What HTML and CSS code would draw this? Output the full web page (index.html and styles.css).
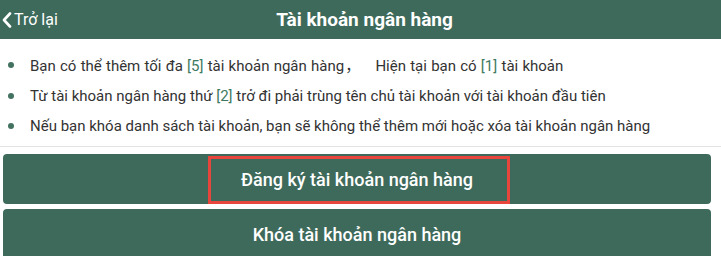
FILE: index.html
```html
<!DOCTYPE html>
<html lang="vi">
<head>
<meta charset="utf-8">
<link rel="stylesheet" href="styles.css">
</head>
<body>
<header class="topbar">
  <a class="back">
    <svg class="back-icon" viewBox="0 0 10 16" width="10" height="16"><polyline points="8,1.5 2,8 8,14.5" fill="none" stroke="#fff" stroke-width="2.6" stroke-linecap="round" stroke-linejoin="round"/></svg>
    <span>Trở lại</span>
  </a>
  <h1 class="title">Tài khoản ngân hàng</h1>
  <span class="spacer"></span>
</header>
<ul class="notes">
  <li class="first">Bạn có thể thêm tối đa <span class="num">[5]</span> tài khoản ngân hàng<span class="cjk">，</span> Hiện tại bạn có <span class="num">[1]</span> tài khoản</li>
  <li>Từ tài khoản ngân hàng thứ <span class="num">[2]</span> trở đi phải trùng tên chủ tài khoản với tài khoản đầu tiên</li>
  <li>Nếu bạn khóa danh sách tài khoản, bạn sẽ không thể thêm mới hoặc xóa tài khoản ngân hàng</li>
</ul>
<div class="actions">
  <button class="btn">Đăng ký tài khoản ngân hàng<span class="highlight"></span></button>
  <button class="btn">Khóa tài khoản ngân hàng</button>
</div>
</body>
</html>
```
FILE: styles.css
```css
* { box-sizing: border-box; }
html, body { margin: 0; padding: 0; background: #fff; }
body {
  width: 721px;
  height: 256px;
  overflow: hidden;
  font-family: Roboto, "Noto Sans", sans-serif;
  color: #333;
}
.topbar {
  height: 39px;
  background: #3e6a5b;
  color: #fff;
  display: grid;
  grid-template-columns: 1fr auto 1fr;
  align-items: center;
}
.back {
  display: flex;
  align-items: center;
  gap: 2px;
  padding-left: 2px;
  font-size: 16px;
  color: #fff;
}
.back-icon { display: block; }
.title {
  margin: 0;
  font-size: 19px;
  font-weight: 700;
  padding-left: 8px;
}
.notes {
  list-style: none;
  margin: 0;
  padding: 11px 0 5px 0;
  border-bottom: 1px solid #e3e3e3;
}
.notes li {
  position: relative;
  line-height: 30px;
  font-size: 15px;
  padding-left: 30px;
  color: #333;
  white-space: nowrap;
}
.notes li.first { word-spacing: 0.5px; }
.notes li::before {
  content: "";
  position: absolute;
  left: 8px;
  top: 12px;
  width: 6px;
  height: 6px;
  border-radius: 50%;
  background: #437261;
}
.cjk {
  font-family: "Noto Sans CJK SC", sans-serif;
  margin-left: 1px;
  margin-right: 11px;
}
.num { color: #3e7a62; }
.actions {
  display: flex;
  flex-direction: column;
  gap: 5px;
  padding: 7px 10px 0 3px;
}
.btn {
  position: relative;
  height: 50px;
  border: 0;
  border-radius: 4px;
  background: #3e6a5b;
  color: #fff;
  font-family: Roboto, "Noto Sans", sans-serif;
  font-size: 18px;
  font-weight: 500;
  padding: 0;
}
.highlight {
  position: absolute;
  left: 205px;
  top: 2px;
  width: 302px;
  height: 48px;
  border: 3px solid #e8453c;
}
```
